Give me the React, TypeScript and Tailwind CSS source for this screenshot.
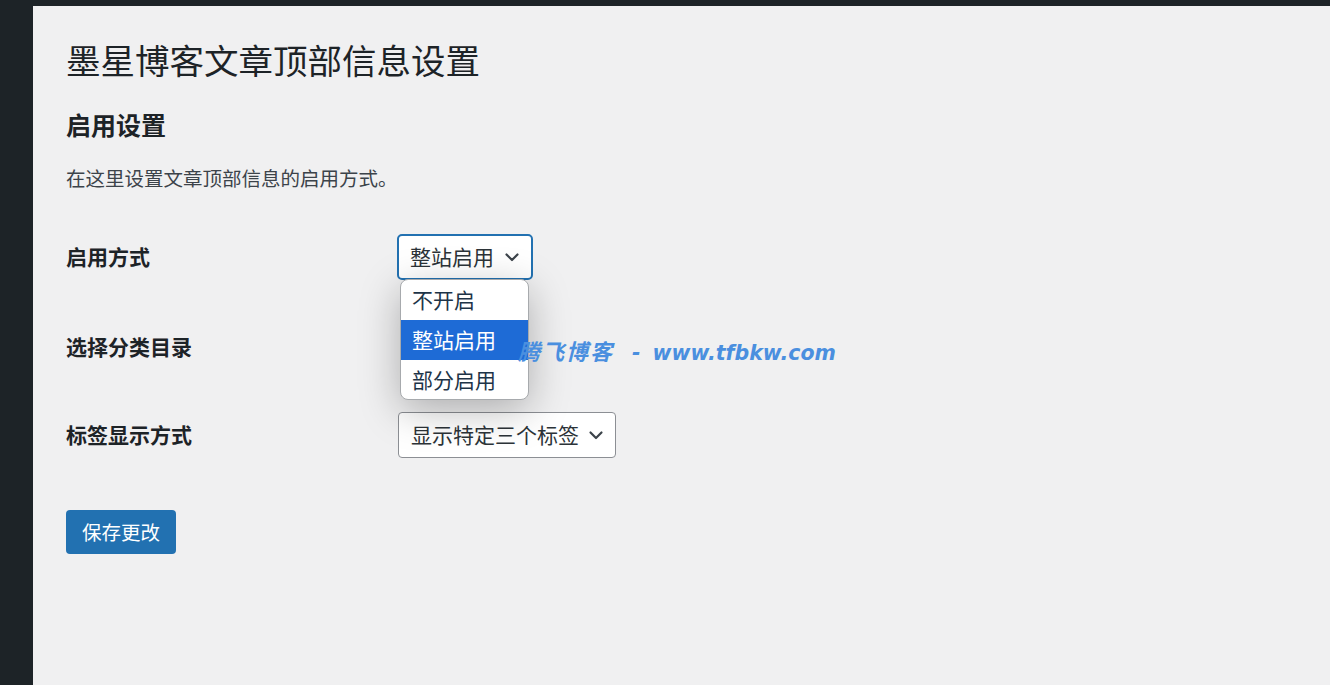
import React from "react";

const font = '"Noto Sans CJK SC", "Noto Sans", sans-serif';

function Chevron() {
  return (
    <svg width="18" height="18" viewBox="0 0 18 18" className="shrink-0">
      <path d="M3.5 6.5 L9 12 L14.5 6.5" fill="none" stroke="#3c434a" strokeWidth="2.2" strokeLinecap="round" strokeLinejoin="round" />
    </svg>
  );
}

export default function App() {
  return (
    <div className="w-[1330px] h-[685px] flex overflow-hidden" style={{ fontFamily: font }}>
      <div className="w-[33px] bg-[#1d2327] shrink-0" />
      <div className="flex-1 flex flex-col">
        <div className="h-[6px] bg-[#1d2327]" />
        <div className="flex-1 bg-[#f0f0f1] pl-[33px] relative">
          <h1 className="mt-[30px] text-[34.5px] leading-[46px] text-[#1d2327] font-normal">墨星博客文章顶部信息设置</h1>
          <h2 className="mt-[25px] text-[25px] leading-[34px] font-bold text-[#1d2327]">启用设置</h2>
          <p className="mt-[22px] text-[19.5px] leading-[30px] text-[#3c434a]">在这里设置文章顶部信息的启用方式。</p>

          <div className="mt-[41px] flex flex-col">
            <div className="flex items-center h-[46px]">
              <div className="w-[331px] text-[21px] font-bold text-[#1d2327]">启用方式</div>
              <div className="relative">
                <div className="h-[46px] w-[136px] rounded-[5px] border-2 border-[#2271b1] bg-white flex items-center justify-between pl-[11px] pr-[10px] text-[21px] text-[#2c3338]">
                  <span>整站启用</span>
                  <Chevron />
                </div>
                <div className="absolute left-[3px] top-[45px] w-[129px] rounded-[8px] border border-[#a7aaad] bg-white overflow-hidden shadow-[0_10px_40px_rgba(0,0,0,0.28)] z-10 text-[21px]">
                  <div className="h-[40px] flex items-center pl-[11px] text-[#1d3448]">不开启</div>
                  <div className="h-[40px] flex items-center pl-[11px] bg-[#1e6bd6] text-white">整站启用</div>
                  <div className="h-[39px] flex items-center pl-[11px] text-[#1d3448]">部分启用</div>
                </div>
              </div>
            </div>
            <div className="flex items-center h-[46px] mt-[44px]">
              <div className="w-[331px] text-[21px] font-bold text-[#1d2327]">选择分类目录</div>
            </div>
            <div className="flex items-center h-[46px] mt-[42px]">
              <div className="w-[332px] text-[21px] font-bold text-[#1d2327]">标签显示方式</div>
              <div className="h-[46px] w-[218px] rounded-[4px] border border-[#8c8f94] bg-white flex items-center justify-between pl-[12px] pr-[10px] text-[21px] text-[#2c3338]">
                <span>显示特定三个标签</span>
                <Chevron />
              </div>
            </div>
          </div>

          <button className="mt-[52px] h-[44px] w-[110px] rounded-[4px] bg-[#2271b1] text-white text-[19.5px] flex items-center justify-center">保存更改</button>

          <div className="absolute left-[485px] top-[328px] italic font-bold text-[20.5px] text-[#4a8fdf] whitespace-nowrap z-20 flex items-baseline" style={{ fontFamily: '"DejaVu Sans", "Noto Sans CJK SC", sans-serif' }}>
            <span className="text-[22px] tracking-[2px]" style={{ fontFamily: '"Noto Sans CJK SC", sans-serif' }}>腾飞博客</span>
            <span className="ml-[18px] mr-[12px]">-</span>
            <span>www.tfbkw.com</span>
          </div>
        </div>
      </div>
    </div>
  );
}
